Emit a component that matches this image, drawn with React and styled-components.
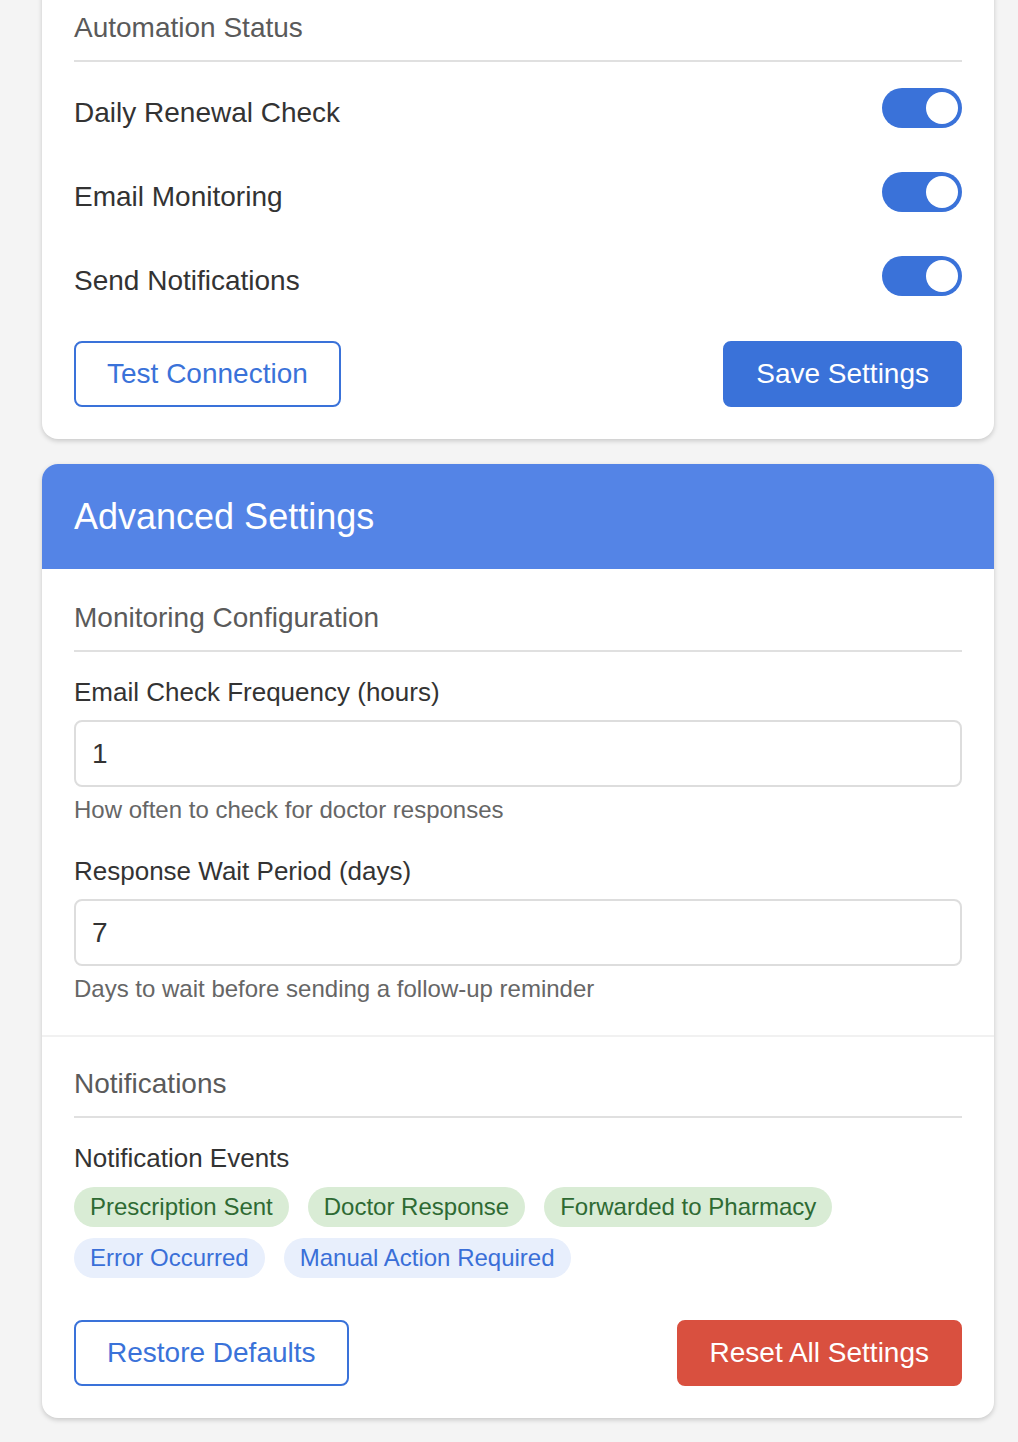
import React, { useState } from "react";
import styled, { createGlobalStyle } from "styled-components";

const GlobalStyle = createGlobalStyle`
  html, body {
    margin: 0;
    padding: 0;
    background: #f4f4f4;
    font-family: "Liberation Sans", Arial, sans-serif;
    color: #333;
  }
  * {
    box-sizing: border-box;
  }
`;

const Page = styled.div`
  display: flex;
  flex-direction: column;
  gap: 25px;
  padding: 0 24px 24px 42px;
  overflow: hidden;
`;

const Card = styled.div`
  background: #fff;
  border-radius: 16px;
  box-shadow: 0 2px 5px rgba(0, 0, 0, 0.18);
  overflow: hidden;
  margin-top: ${(p) => p.$offset || 0}px;
  padding: ${(p) => (p.$padded ? "32px" : "0")};
`;

const CardHeader = styled.div`
  background: #5484e6;
  color: #fff;
  font-size: 36px;
  line-height: 41px;
  padding: 32px;
`;

const Section = styled.div`
  padding: 32px;
  border-top: ${(p) => (p.$divided ? "2px solid #f1f1f1" : "none")};
  padding-top: ${(p) => (p.$divided ? "31px" : "33px")};
`;

const SectionTitle = styled.h3`
  margin: 0 0 ${(p) => p.$gap || 24}px;
  font-size: 28px;
  line-height: 32px;
  font-weight: 400;
  color: #5a5a5a;
  padding-bottom: 16px;
  border-bottom: 2px solid #e0e0e0;
`;

const ToggleRow = styled.div`
  display: flex;
  align-items: center;
  justify-content: space-between;
  padding: 21px 0;
`;

const ToggleLabel = styled.span`
  font-size: 28px;
  line-height: 32px;
  padding-top: 10px;
  color: #333;
`;

const Switch = styled.button`
  width: 80px;
  height: 40px;
  border-radius: 20px;
  border: none;
  padding: 4px;
  background: ${(p) => (p.$on ? "#3a72d9" : "#ccc")};
  display: flex;
  justify-content: ${(p) => (p.$on ? "flex-end" : "flex-start")};
  cursor: pointer;
`;

const Knob = styled.span`
  width: 32px;
  height: 32px;
  border-radius: 50%;
  background: #fff;
`;

const ButtonRow = styled.div`
  display: flex;
  justify-content: space-between;
  margin-top: ${(p) => p.$gap || 23}px;
`;

const Button = styled.button`
  font-family: inherit;
  font-size: 28px;
  line-height: 32px;
  padding: 15px 31px;
  border-radius: 8px;
  border: 2px solid ${(p) => (p.$variant === "danger" ? "#d9503f" : "#3a72d9")};
  background: ${(p) =>
    p.$variant === "primary" ? "#3a72d9" : p.$variant === "danger" ? "#d9503f" : "#fff"};
  color: ${(p) => (p.$variant === "outline" ? "#3a72d9" : "#fff")};
  cursor: pointer;
`;

const Field = styled.div`
  margin-bottom: ${(p) => (p.$last ? 0 : 31)}px;
`;

const Label = styled.label`
  display: block;
  font-size: 26px;
  line-height: 32px;
  color: #333;
  margin-bottom: ${(p) => (p.$flush ? 0 : 12)}px;
`;

const Input = styled.input`
  display: block;
  width: 100%;
  height: 67px;
  border: 2px solid #ddd;
  border-radius: 8px;
  padding: 0 16px;
  font-family: inherit;
  font-size: 28px;
  color: #333;
  outline: none;
`;

const Help = styled.div`
  margin-top: 9px;
  font-size: 24px;
  line-height: 28px;
  color: #666;
`;

const Chips = styled.div`
  display: flex;
  flex-wrap: wrap;
  gap: 11px 19px;
  margin-top: 13px;
`;

const Chip = styled.span`
  font-size: 24px;
  line-height: 28px;
  padding: 6px 16px;
  border-radius: 20px;
  background: ${(p) => (p.$tone === "green" ? "#d9ecd5" : "#e8effc")};
  color: ${(p) => (p.$tone === "green" ? "#2e6a33" : "#3a6fd8")};
`;

const events = [
  { name: "Prescription Sent", tone: "green" },
  { name: "Doctor Response", tone: "green" },
  { name: "Forwarded to Pharmacy", tone: "green" },
  { name: "Error Occurred", tone: "blue" },
  { name: "Manual Action Required", tone: "blue" },
];

const App = () => {
  const [toggles, setToggles] = useState({
    daily: true,
    email: true,
    notify: true,
  });
  const [frequency, setFrequency] = useState("1");
  const [waitDays, setWaitDays] = useState("7");

  const flip = (key) => setToggles((prev) => ({ ...prev, [key]: !prev[key] }));

  const rows = [
    { key: "daily", label: "Daily Renewal Check" },
    { key: "email", label: "Email Monitoring" },
    { key: "notify", label: "Send Notifications" },
  ];

  return (
    <>
      <GlobalStyle />
      <Page>
        <Card $padded $offset={-20}>
          <SectionTitle $gap={4}>Automation Status</SectionTitle>
          {rows.map((row) => (
            <ToggleRow key={row.key}>
              <ToggleLabel>{row.label}</ToggleLabel>
              <Switch $on={toggles[row.key]} onClick={() => flip(row.key)}>
                <Knob />
              </Switch>
            </ToggleRow>
          ))}
          <ButtonRow>
            <Button $variant="outline">Test Connection</Button>
            <Button $variant="primary">Save Settings</Button>
          </ButtonRow>
        </Card>

        <Card>
          <CardHeader>Advanced Settings</CardHeader>
          <Section>
            <SectionTitle>Monitoring Configuration</SectionTitle>
            <Field>
              <Label>Email Check Frequency (hours)</Label>
              <Input value={frequency} onChange={(e) => setFrequency(e.target.value)} />
              <Help>How often to check for doctor responses</Help>
            </Field>
            <Field $last>
              <Label>Response Wait Period (days)</Label>
              <Input value={waitDays} onChange={(e) => setWaitDays(e.target.value)} />
              <Help>Days to wait before sending a follow-up reminder</Help>
            </Field>
          </Section>
          <Section $divided>
            <SectionTitle>Notifications</SectionTitle>
            <Label as="div" $flush>
              Notification Events
            </Label>
            <Chips>
              {events.map((ev) => (
                <Chip key={ev.name} $tone={ev.tone}>
                  {ev.name}
                </Chip>
              ))}
            </Chips>
            <ButtonRow $gap={42}>
              <Button $variant="outline">Restore Defaults</Button>
              <Button $variant="danger">Reset All Settings</Button>
            </ButtonRow>
          </Section>
        </Card>
      </Page>
    </>
  );
};

export default App;
